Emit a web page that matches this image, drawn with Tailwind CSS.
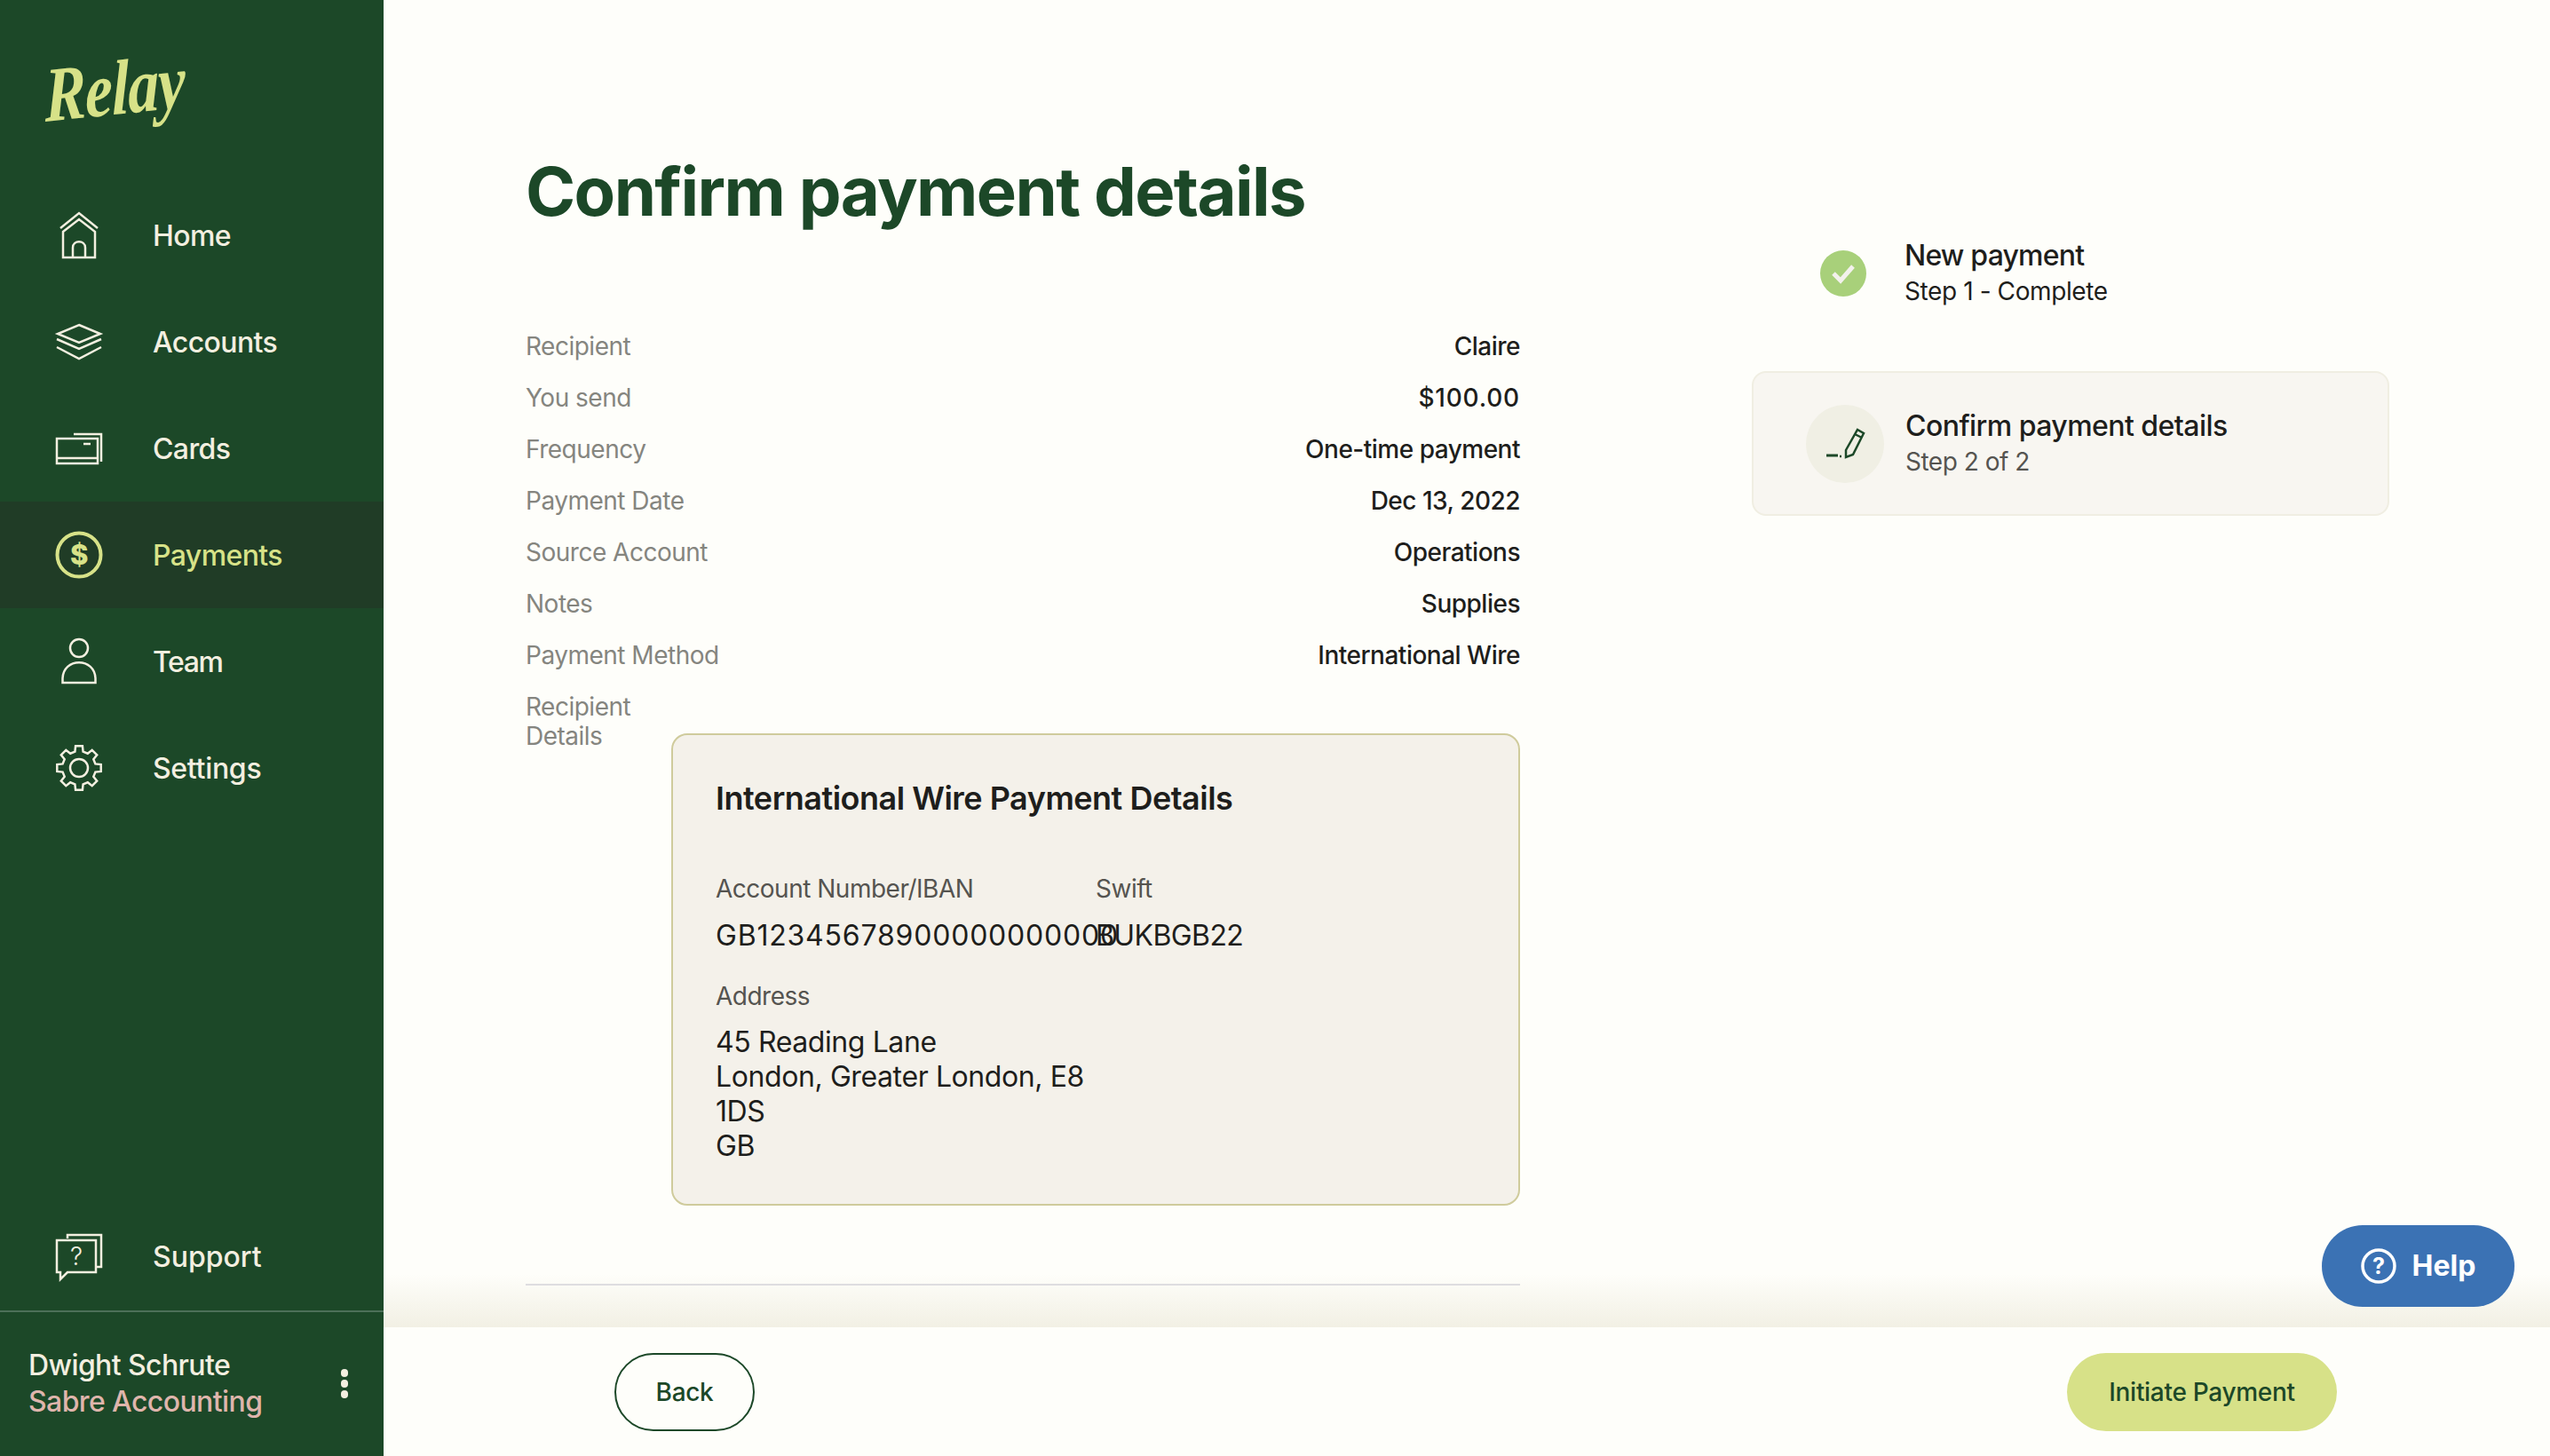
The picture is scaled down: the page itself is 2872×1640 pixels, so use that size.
<!DOCTYPE html>
<html lang="en">
<head>
    <meta charset="UTF-8">
    <meta name="viewport" content="width=device-width, initial-scale=1.0">
    <title>Relay - Confirm payment details</title>
    <script src="https://cdn.jsdelivr.net/npm/@tailwindcss/browser@4"></script>
</head>
<body class="h-screen overflow-hidden bg-[#fefefa] font-['Inter',sans-serif]">
    <div class="flex h-[1640px]">
        <!-- Sidebar -->
        <aside class="w-[432px] shrink-0 bg-[#1c4828] flex flex-col text-[#f3efe0]">
            <div class="h-[205px] pl-[50px] pt-[60px]">
                <span class="block w-fit -rotate-6 -skew-x-6 scale-y-125 font-['Liberation_Serif',serif] italic font-bold text-[70px] leading-[80px] tracking-[-1px] text-[#d7e288]">Relay</span>
            </div>
            <nav class="flex flex-col text-[32px] font-medium tracking-[-0.6px]">
                <a href="#" class="flex items-center h-[120px] pl-[59px] gap-[53px]">
                    <svg class="w-[60px] h-[60px]" viewBox="0 0 60 60" fill="none" stroke="#f3efe0" stroke-width="2.5"><path d="M9 22 30 5l21 17"/><path d="M12 26 30 12l18 14v29H12zM12 55h11V44c0-9 14-9 14 0v11h11"/></svg>
                    <span class="pt-[2px]">Home</span>
                </a>
                <a href="#" class="flex items-center h-[120px] pl-[59px] gap-[53px]">
                    <svg class="w-[60px] h-[60px]" viewBox="0 0 60 60" fill="none" stroke="#f3efe0" stroke-width="2.5"><path d="M30 11 54 21 30 31 6 21z"/><path d="M5 27 30 38 55 27"/><path d="M5 36 30 49 55 36"/></svg>
                    <span class="pt-[2px]">Accounts</span>
                </a>
                <a href="#" class="flex items-center h-[120px] pl-[59px] gap-[53px]">
                    <svg class="w-[60px] h-[60px]" viewBox="0 0 60 60" fill="none" stroke="#f3efe0" stroke-width="2.5"><path d="M24 14H55V45"/><path d="M5 19H51V47H5zM5 41H51M35 25H43"/></svg>
                    <span class="pt-[2px]">Cards</span>
                </a>
                <a href="#" class="flex items-center h-[120px] pl-[59px] gap-[53px] bg-[#203c26] text-[#d7e288]">
                    <svg class="w-[60px] h-[60px]" viewBox="0 0 60 60" fill="none" stroke="#d7e288" stroke-width="4"><circle cx="30" cy="30" r="24.5"/><text x="30" y="41" text-anchor="middle" fill="#d7e288" stroke="none" font-family="Inter" font-weight="800" font-size="31">$</text></svg>
                    <span class="pt-[2px]">Payments</span>
                </a>
                <a href="#" class="flex items-center h-[120px] pl-[59px] gap-[53px]">
                    <svg class="w-[60px] h-[60px]" viewBox="0 0 60 60" fill="none" stroke="#f3efe0" stroke-width="2.5"><circle cx="30" cy="15" r="10"/><path d="M11.500 54V50C11.500 25 48.500 25 48.500 50V54Z"/></svg>
                    <span class="pt-[2px] tracking-[-1.4px]">Team</span>
                </a>
                <a href="#" class="flex items-center h-[120px] pl-[59px] gap-[53px]">
                    <svg class="w-[60px] h-[60px]" viewBox="-30 -30 60 60" fill="none" stroke="#f3efe0" stroke-width="2.5"><path d="M-3.900-24.700 3.900-24.700 4.600-18.400 9.800-16.300 14.700-20.200 20.200-14.700 16.300-9.800 18.400-4.600 24.700-3.900 24.700 3.900 18.400 4.600 16.300 9.800 20.200 14.700 14.700 20.200 9.800 16.300 4.600 18.400 3.900 24.700-3.900 24.700-4.600 18.400-9.800 16.300-14.700 20.200-20.200 14.700-16.300 9.800-18.400 4.600-24.700 3.900-24.700-3.900-18.400-4.600-16.300-9.800-20.200-14.700-14.700-20.200-9.800-16.300-4.600-18.400Z"/><circle r="10"/></svg>
                    <span class="pt-[2px] tracking-[-0.3px]">Settings</span>
                </a>
            </nav>
            <a href="#" class="mt-auto flex items-center h-[120px] pl-[59px] gap-[53px] text-[32px] font-medium">
                <svg class="w-[60px] h-[60px]" viewBox="0 0 60 60" fill="none" stroke="#f3efe0" stroke-width="2.500"><path d="M17 9V5H55V41H50"/><path d="M5 11H49V47H17L9 55V47H5Z"/><text x="27" y="39" text-anchor="middle" fill="#f3efe0" stroke="none" font-family="Inter" font-size="28" font-weight="300">?</text></svg>
                Support
            </a>
            <div class="h-[164px] border-t-2 border-[#4c7058] pl-[32px] pr-[40px] pb-[2px] flex items-center justify-between text-[32px] font-medium tracking-[-0.6px] leading-[41px]">
                <div>
                    <div>Dwight Schrute</div>
                    <div class="text-[#dfb5ac]">Sabre Accounting</div>
                </div>
                <div class="flex flex-col gap-[3px]">
                    <span class="w-[8px] h-[9px] rounded-full bg-[#f3efe0]"></span>
                    <span class="w-[8px] h-[9px] rounded-full bg-[#f3efe0]"></span>
                    <span class="w-[8px] h-[9px] rounded-full bg-[#f3efe0]"></span>
                </div>
            </div>
        </aside>

        <!-- Main content -->
        <main class="relative flex-1 flex flex-col">
            <div class="h-[1495px] overflow-hidden pl-[160px] flex">
                <section class="w-[1120px] shrink-0 pt-[160px]">
                    <h1 class="text-[76px] leading-[110px] font-bold tracking-[-1.6px] text-[#1c4828]">Confirm payment details</h1>
                    <dl class="mt-[91px] text-[28px] tracking-[-0.5px]">
                        <div class="flex justify-between items-center h-[58px]"><dt class="text-[#85857f]">Recipient</dt><dd class="font-medium text-[#1e1e1c]">Claire</dd></div>
                        <div class="flex justify-between items-center h-[58px]"><dt class="text-[#85857f]">You send</dt><dd class="font-medium text-[#1e1e1c] tracking-[0.8px]">$100.00</dd></div>
                        <div class="flex justify-between items-center h-[58px]"><dt class="text-[#85857f]">Frequency</dt><dd class="font-medium text-[#1e1e1c]">One-time payment</dd></div>
                        <div class="flex justify-between items-center h-[58px]"><dt class="text-[#85857f]">Payment Date</dt><dd class="font-medium text-[#1e1e1c]">Dec 13, 2022</dd></div>
                        <div class="flex justify-between items-center h-[58px]"><dt class="text-[#85857f]">Source Account</dt><dd class="font-medium text-[#1e1e1c]">Operations</dd></div>
                        <div class="flex justify-between items-center h-[58px]"><dt class="text-[#85857f]">Notes</dt><dd class="font-medium text-[#1e1e1c]">Supplies</dd></div>
                        <div class="flex justify-between items-center h-[58px]"><dt class="text-[#85857f]">Payment Method</dt><dd class="font-medium text-[#1e1e1c]">International Wire</dd></div>
                        <div class="flex justify-between">
                            <dt class="text-[#85857f] pt-[13px] leading-[33px] w-[140px]">Recipient<br>Details</dt>
                            <dd class="mt-[59px] w-[956px] h-[532px] bg-[#f4f1ea] border-2 border-[#cfcb9c] rounded-[18px] pl-[48px] pt-[48px] text-[#1e1e1c]">
                                <h3 class="text-[36px] leading-[46px] font-semibold tracking-[-0.5px]">International Wire Payment Details</h3>
                                <div class="grid grid-cols-[428px_1fr] mt-[59px]">
                                    <div>
                                        <div class="text-[28px] leading-[40px] text-[#555450]">Account Number/IBAN</div>
                                        <div class="mt-[13px] text-[32px] leading-[40px] whitespace-nowrap tracking-[0.8px]">GB12345678900000000000</div>
                                    </div>
                                    <div>
                                        <div class="text-[28px] leading-[40px] text-[#555450]">Swift</div>
                                        <div class="mt-[13px] text-[32px] leading-[40px] tracking-[-0.6px]">BUKBGB22</div>
                                    </div>
                                </div>
                                <div class="mt-[28px] text-[28px] leading-[40px] text-[#555450]">Address</div>
                                <div class="mt-[12px] text-[32px] leading-[39px] tracking-[-0.4px]">45 Reading Lane<br>London, Greater London, E8<br>1DS<br>GB</div>
                            </dd>
                        </div>
                    </dl>
                    <div class="mt-[88px] h-[2px] bg-[#d9d8df]"></div>
                </section>

                <!-- Steps -->
                <section class="ml-[261px] w-[718px] shrink-0 pt-[268px]">
                    <div class="flex items-center pl-[77px] gap-[43px]">
                        <span class="w-[52px] h-[52px] rounded-full bg-[#a8d07a] flex items-center justify-center">
                            <svg class="w-[30px] h-[30px]" viewBox="0 0 30 30" fill="none" stroke="#f3f1ec" stroke-width="5"><path d="M4 15 12 23 26 7"/></svg>
                        </span>
                        <div class="text-[#1e1e1c]">
                            <div class="text-[32px] leading-[40px] font-medium tracking-[-0.8px]">New payment</div>
                            <div class="text-[28px] leading-[40px] tracking-[-0.4px]">Step 1 - Complete</div>
                        </div>
                    </div>
                    <div class="mt-[70px] h-[163px] bg-[#f8f6f1] border-2 border-[#f0eee2] rounded-[16px] flex items-center pl-[59px] gap-[24px]">
                        <span class="w-[88px] h-[88px] rounded-full bg-[#f0efe4] flex items-center justify-center">
                            <svg class="w-[48px] h-[48px]" viewBox="0 0 48 48" fill="none" stroke="#1c4828" stroke-width="2.500"><path d="M25 31 38 8 45 12 33 36 25 39Z"/><path d="M35 13 43 17"/><path d="M3 37H16" stroke-width="3"/><path d="M18 38H20"/></svg>
                        </span>
                        <div class="pt-[1px]">
                            <div class="text-[32px] leading-[40px] font-medium tracking-[-0.55px] text-[#1e1e1c]">Confirm payment details</div>
                            <div class="text-[28px] leading-[40px] tracking-[-0.5px] text-[#555450]">Step 2 of 2</div>
                        </div>
                    </div>
                </section>
            </div>

            <!-- Footer -->
            <footer class="relative h-[145px] flex items-start justify-between pt-[29px] pl-[260px] pr-[240px] text-[28px] font-medium tracking-[-0.3px] text-[#1c4828]">
                <div class="absolute left-0 right-0 bottom-full h-[60px] bg-linear-to-t from-[#f2f0e4] to-transparent"></div>
                <button class="w-[158px] h-[88px] rounded-full border-2 border-[#1c4828]">Back</button>
                <button class="w-[304px] h-[88px] rounded-full bg-[#d7e188]">Initiate Payment</button>
            </footer>

            <!-- Help -->
            <button class="absolute left-[2183px] top-[1380px] w-[217px] h-[92px] rounded-full bg-[#3b72b4] text-white text-[32px] font-bold flex items-center justify-center gap-[18px]">
                <svg class="w-[40px] h-[40px]" viewBox="0 0 40 40" fill="none" stroke="#ffffff" stroke-width="3.500"><circle cx="20" cy="20" r="18"/><text x="20" y="29" text-anchor="middle" fill="#ffffff" stroke="none" font-family="Inter" font-weight="700" font-size="25">?</text></svg>
                Help
            </button>
        </main>
    </div>
</body>
</html>
